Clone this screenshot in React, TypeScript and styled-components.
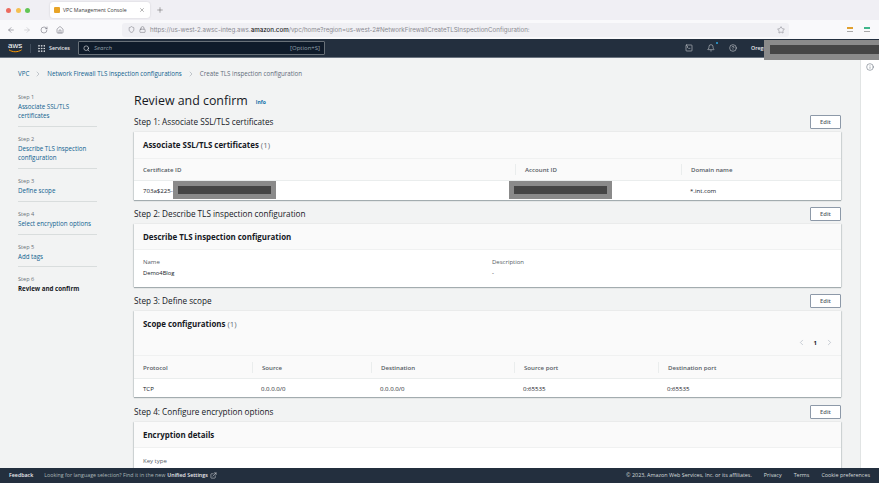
import React from "react";
import styled, { createGlobalStyle } from "styled-components";
import {
  ArrowLeft, ArrowRight, RotateCw, Home, Shield, Lock, Star, Search, Grip, Bell,
  CircleHelp, SquareTerminal, Info, ChevronLeft, ChevronRight, ExternalLink, Plus, X,
} from "lucide-react";

const Global = createGlobalStyle`
  html, body { margin: 0; padding: 0; height: 100%; overflow: hidden; }
  #root { height: 100%; }
  * { box-sizing: border-box; }
  body { font-family: "Open Sans", "Liberation Sans", sans-serif; color: #16191f; }
`;

const Shell = styled.div`display: flex; flex-direction: column; height: 100vh; background: #f2f3f3; overflow: hidden;`;

const TabBar = styled.div`height: 20px; background: #f0eff4; display: flex; align-items: center; padding: 0 0 0 6px; flex: none;`;
const Lights = styled.div`display: flex; gap: 4.5px; width: 44px;`;
const Light = styled.span<{ $c: string }>`width: 5px; height: 5px; border-radius: 50%; background: ${p => p.$c};`;
const Tab = styled.div`
  width: 100px; height: 16px; background: #fff; border-radius: 3px; display: flex; align-items: center;
  padding: 0 5px 0 4px; gap: 3px; font-size: 5.2px; color: #3b3b3b; box-shadow: 0 0 2px rgba(0,0,0,.15);
`;
const TabTitle = styled.span`flex: 1; white-space: nowrap;`;
const Cube = styled.span`width: 6px; height: 6px; border-radius: 1px; background: #e8a427; flex: none;`;
const NewTab = styled.span`display: flex; margin-left: 6px; color: #444;`;

const AddressBar = styled.div`height: 19px; background: #f9f9fb; display: flex; align-items: center; padding: 0 0 0 7px; flex: none;`;
const NavIcons = styled.div`display: flex; align-items: center; gap: 8.3px; width: 115px; color: #5b5b66;`;
const UrlBox = styled.div`
  width: 667px; height: 14px; background: #f0f0f4; border-radius: 3px; display: flex; align-items: center;
  padding: 0 4px 0 6px; gap: 4px; color: #5b5b66; flex: none;
`;
const UrlText = styled.span`flex: 1; font-size: 6.2px; color: #8a8a92; white-space: nowrap; font-family: "Inter", "Open Sans", sans-serif;`;
const UrlStrong = styled.b`color: #222; font-weight: 500;`;
const Extensions = styled.div`display: flex; flex: 1; justify-content: flex-end; align-items: center; gap: 11px; padding-right: 9px;`;
const ExtMark = styled.span<{ $c: string }>`width: 6px; height: 5px; border-top: 2px solid ${p => p.$c}; border-bottom: 1px solid #a9a9a9;`;

const TopNav = styled.header`
  height: 19px; background: #232f3e; border-bottom: 1px solid #6b7480; display: flex; align-items: center;
  position: relative; color: #d5dbdb; flex: none;
`;
const LogoWrap = styled.div`
  width: 23px; margin-left: 8px; display: flex; flex-direction: column; align-items: flex-start; color: #fff;
`;
const LogoText = styled.span`font-size: 8px; line-height: 6px; font-weight: 400; font-family: "Liberation Sans", sans-serif;`;
const NavSep = styled.span`width: 1px; height: 9px; background: #414d5c; margin: 0 6px 0 -1px;`;
const ServicesBtn = styled.div`display: flex; align-items: center; gap: 3px; font-size: 5.3px; font-weight: 600; color: #e9ebed; width: 41px; flex: none;`;
const SearchBox = styled.div`
  width: 247px; height: 14px; background: #0f1b2a; border: 1px solid #687078; border-radius: 1px; display: flex;
  align-items: center; padding: 0 4px; gap: 4px; font-size: 6px; color: #95a1ab;
`;
const SearchHint = styled.span`flex: 1; font-style: italic;`;
const NavRight = styled.div`display: flex; align-items: center; margin-left: auto; width: 194px; gap: 14px; color: #e9ebed; flex: none;`;
const NavDot = styled.span`position: relative; display: flex;`;
const Dot = styled.span`position: absolute; right: -3px; top: -2px; width: 2px; height: 2px; background: #2ea7e0; border-radius: 50%;`;
const Region = styled.span`font-size: 5.3px; font-weight: 600;`;
const TopRedaction = styled.div`
  position: absolute; right: 0; top: 1px; width: 115px; height: 20px; background: #8a8a8a;
  padding: 5px 0 6px 6px; z-index: 3;
`;
const RedactionFill = styled.div`width: 100%; height: 100%; background: #454545;`;

const Body = styled.div`flex: 1; display: flex; min-height: 0;`;
const Content = styled.div`flex: 1; display: flex; flex-direction: column; min-width: 0; overflow: hidden;`;
const Rail = styled.aside`width: 19px; background: #fff; border-left: 1px solid #e1e4e4; display: flex; justify-content: center; padding-top: 5px; color: #414d5c; flex: none;`;

const Breadcrumbs = styled.nav`height: 34px; padding: 0 0 3px 18px; display: flex; align-items: center; gap: 5px; font-size: 6.2px; color: #5f6b7a; flex: none;`;
const Crumb = styled.span`color: #0f5f8f; font-weight: 500;`;
const Columns = styled.div`display: flex; flex: 1; min-height: 0;`;
const Sidebar = styled.aside`width: 134px; padding: 1px 37px 0 18px; flex: none;`;
const Step = styled.div`
  padding-bottom: 6px; margin-bottom: 8px; border-bottom: 1px solid #d9dddd;
  &:nth-child(5) { padding-bottom: 5px; }
  &:last-child { border: 0; }
`;
const StepLabel = styled.div`font-size: 5.6px; line-height: 9px; color: #687078;`;
const StepLink = styled.div<{ $active?: boolean }>`
  font-size: 6.2px; line-height: 9px; color: ${p => (p.$active ? "#16191f" : "#0f5f8f")}; font-weight: ${p => (p.$active ? 700 : 500)};
`;

const Main = styled.main`width: 707px; flex: none;`;
const TitleRow = styled.div`height: 24px; margin-top: -1px; display: flex; align-items: flex-start; gap: 8px;`;
const PageTitle = styled.h1`margin: 0; font-size: 12.4px; line-height: 19px; font-weight: 400; color: #16191f;`;
const InfoLink = styled.span`font-size: 5px; line-height: 10px; font-weight: 700; color: #0f6fa8; padding-top: 6px;`;

const Section = styled.section<{ $gap?: number }>`margin-bottom: ${p => p.$gap ?? 7}px;`;
const SectionHead = styled.div`height: 17px; display: flex; align-items: flex-start; justify-content: space-between;`;
const SectionTitle = styled.h2`margin: 0; font-size: 8.2px; line-height: 14px; font-weight: 400; color: #16191f;`;
const EditBtn = styled.button`
  width: 31px; height: 14px; background: #fff; border: 1px solid #8d99a8; border-radius: 1px; font: 600 5.8px "Open Sans", sans-serif;
  color: #545b64; padding: 0;
`;
const Card = styled.div`background: #fff; box-shadow: 0 1px 1px rgba(0,28,36,.3), 1px 0 1px rgba(0,28,36,.1), -1px 0 1px rgba(0,28,36,.1);`;
const CardHead = styled.div<{ $h: number }>`
  height: ${p => p.$h}px; background: #fafafa; padding: 0 9px; position: relative; border-bottom: 1px solid #f0f1f1;
`;
const CardTitle = styled.h3`margin: 0; font-size: 7.9px; line-height: 26px; font-weight: 700; color: #16191f;`;
const Count = styled.span`font-weight: 400; color: #687078;`;
const Pager = styled.div`position: absolute; right: 7px; bottom: 8px; display: flex; align-items: center; gap: 8px; font-size: 6px; font-weight: 700; color: #16191f;`;
const PagerIcon = styled.span`display: flex; color: #8d99a8;`;

const Row = styled.div<{ $cols: string; $h: number; $head?: boolean }>`
  display: grid; grid-template-columns: ${p => p.$cols}; height: ${p => p.$h}px; align-items: center; position: relative;
  background: ${p => (p.$head ? "#fafafa" : "#fff")};
  border-bottom: ${p => (p.$head ? "1px solid #eaeded" : "0")};
`;
const HeadCell = styled.div`
  font-size: 6.1px; font-weight: 600; color: #545b64; padding-left: 9px; height: 11px; line-height: 11px; white-space: nowrap;
  & + & { border-left: 1px solid #eaeded; }
`;
const BodyCell = styled.div`font-size: 6.1px; color: #16191f; padding-left: 9px; white-space: nowrap;`;
const Redaction = styled.div<{ $left: number }>`
  position: absolute; left: ${p => p.$left}px; top: 0; width: 103px; height: 18px; background: #8a8a8a; padding: 5px; z-index: 2;
`;

const KV = styled.div<{ $pad: number }>`display: grid; grid-template-columns: 349px 1fr; padding: ${p => p.$pad}px 9px 0; height: 37px;`;
const KVLabel = styled.div`font-size: 6px; line-height: 10px; color: #545b64;`;
const KVValue = styled.div`font-size: 5.8px; line-height: 12px; color: #16191f;`;

const Footer = styled.footer`
  height: 15px; background: #232f3e; color: #d5dbdb; display: flex; align-items: center; padding: 0 9px 1px 9px;
  font-size: 5.3px; flex: none; position: relative; z-index: 2;
`;
const FootStrong = styled.span`font-weight: 600; color: #e9ebed;`;
const FootNote = styled.span`margin-left: 11px; color: #aab7b8; display: flex; align-items: center; gap: 2px;`;
const FootRight = styled.div`margin-left: auto; display: flex; gap: 12px; font-size: 5.4px;`;

const steps: [string, string[], boolean?][] = [
  ["Step 1", ["Associate SSL/TLS", "certificates"]],
  ["Step 2", ["Describe TLS inspection", "configuration"]],
  ["Step 3", ["Define scope"]],
  ["Step 4", ["Select encryption options"]],
  ["Step 5", ["Add tags"]],
  ["Step 6", ["Review and confirm"], true],
];

const certCols = "381px 166px 160px";
const scopeCols = "118px 119px 143px 144px 183px";

export default function App() {
  return (
    <Shell>
      <Global />
      <TabBar>
        <Lights>
          <Light $c="#ec6a5e" /><Light $c="#f4bf4f" /><Light $c="#61c554" />
        </Lights>
        <Tab>
          <Cube />
          <TabTitle>VPC Management Console</TabTitle>
          <X size={6} strokeWidth={1.5} />
        </Tab>
        <NewTab><Plus size={8} strokeWidth={1.3} /></NewTab>
      </TabBar>
      <AddressBar>
        <NavIcons>
          <ArrowLeft size={8} strokeWidth={1.5} />
          <ArrowRight size={8} strokeWidth={1.5} color="#b5b5bb" />
          <RotateCw size={8} strokeWidth={1.5} />
          <Home size={8} strokeWidth={1.5} />
        </NavIcons>
        <UrlBox>
          <Shield size={7} strokeWidth={1.5} />
          <Lock size={7} strokeWidth={1.5} />
          <UrlText>
            https://us-west-2.awsc-integ.aws.<UrlStrong>amazon.com</UrlStrong>/vpc/home?region=us-west-2#NetworkFirewallCreateTLSInspectionConfiguration:
          </UrlText>
          <Star size={8} strokeWidth={1.2} />
        </UrlBox>
        <Extensions>
          <ExtMark $c="#e0a030" />
          <ExtMark $c="#3fb68b" />
        </Extensions>
      </AddressBar>
      <TopNav>
        <LogoWrap>
          <LogoText>aws</LogoText>
          <svg width="15" height="4" viewBox="0 0 15 4">
            <path d="M1 .8C4.5 3.4 10 3.4 13.6 .8" fill="none" stroke="#f90" strokeWidth="1" />
          </svg>
        </LogoWrap>
        <NavSep />
        <ServicesBtn><Grip size={9} strokeWidth={2} /><span>Services</span></ServicesBtn>
        <SearchBox>
          <Search size={7} strokeWidth={1.8} color="#fff" />
          <SearchHint>Search</SearchHint>
          <span>[Option+S]</span>
        </SearchBox>
        <NavRight>
          <SquareTerminal size={8} strokeWidth={1.5} />
          <NavDot><Bell size={8} strokeWidth={1.5} /><Dot /></NavDot>
          <CircleHelp size={8} strokeWidth={1.5} />
          <Region>Oregon</Region>
        </NavRight>
        <TopRedaction><RedactionFill /></TopRedaction>
      </TopNav>
      <Body>
        <Content>
          <Breadcrumbs>
            <Crumb>VPC</Crumb>
            <ChevronRight size={8} strokeWidth={1} />
            <Crumb>Network Firewall TLS inspection configurations</Crumb>
            <ChevronRight size={8} strokeWidth={1} />
            <span>Create TLS inspection configuration</span>
          </Breadcrumbs>
          <Columns>
            <Sidebar>
              {steps.map(([label, lines, active]) => (
                <Step key={label}>
                  <StepLabel>{label}</StepLabel>
                  {lines.map(l => <StepLink key={l} $active={active}>{l}</StepLink>)}
                </Step>
              ))}
            </Sidebar>
            <Main>
              <TitleRow>
                <PageTitle>Review and confirm</PageTitle>
                <InfoLink>Info</InfoLink>
              </TitleRow>

              <Section>
                <SectionHead>
                  <SectionTitle>Step 1: Associate SSL/TLS certificates</SectionTitle>
                  <EditBtn>Edit</EditBtn>
                </SectionHead>
                <Card>
                  <CardHead $h={27}><CardTitle>Associate SSL/TLS certificates <Count>(1)</Count></CardTitle></CardHead>
                  <Row $cols={certCols} $h={22} $head>
                    <HeadCell>Certificate ID</HeadCell>
                    <HeadCell>Account ID</HeadCell>
                    <HeadCell>Domain name</HeadCell>
                  </Row>
                  <Row $cols={certCols} $h={19}>
                    <BodyCell>703a$225-</BodyCell>
                    <BodyCell />
                    <BodyCell>*.int.com</BodyCell>
                    <Redaction $left={39}><RedactionFill /></Redaction>
                    <Redaction $left={375}><RedactionFill /></Redaction>
                  </Row>
                </Card>
              </Section>

              <Section>
                <SectionHead>
                  <SectionTitle>Step 2: Describe TLS inspection configuration</SectionTitle>
                  <EditBtn>Edit</EditBtn>
                </SectionHead>
                <Card>
                  <CardHead $h={26}><CardTitle>Describe TLS inspection configuration</CardTitle></CardHead>
                  <KV $pad={7}>
                    <div><KVLabel>Name</KVLabel><KVValue>Demo4Blog</KVValue></div>
                    <div><KVLabel>Description</KVLabel><KVValue>-</KVValue></div>
                  </KV>
                </Card>
              </Section>

              <Section $gap={8}>
                <SectionHead>
                  <SectionTitle>Step 3: Define scope</SectionTitle>
                  <EditBtn>Edit</EditBtn>
                </SectionHead>
                <Card>
                  <CardHead $h={45}>
                    <CardTitle>Scope configurations <Count>(1)</Count></CardTitle>
                    <Pager>
                      <PagerIcon><ChevronLeft size={9} strokeWidth={1.2} /></PagerIcon>
                      <span>1</span>
                      <PagerIcon><ChevronRight size={9} strokeWidth={1.2} /></PagerIcon>
                    </Pager>
                  </CardHead>
                  <Row $cols={scopeCols} $h={23} $head>
                    <HeadCell>Protocol</HeadCell>
                    <HeadCell>Source</HeadCell>
                    <HeadCell>Destination</HeadCell>
                    <HeadCell>Source port</HeadCell>
                    <HeadCell>Destination port</HeadCell>
                  </Row>
                  <Row $cols={scopeCols} $h={18}>
                    <BodyCell>TCP</BodyCell>
                    <BodyCell>0.0.0.0/0</BodyCell>
                    <BodyCell>0.0.0.0/0</BodyCell>
                    <BodyCell>0:65535</BodyCell>
                    <BodyCell>0:65535</BodyCell>
                  </Row>
                </Card>
              </Section>

              <Section>
                <SectionHead>
                  <SectionTitle>Step 4: Configure encryption options</SectionTitle>
                  <EditBtn>Edit</EditBtn>
                </SectionHead>
                <Card>
                  <CardHead $h={26}><CardTitle>Encryption details</CardTitle></CardHead>
                  <KV $pad={8}><KVLabel>Key type</KVLabel></KV>
                </Card>
              </Section>
            </Main>
          </Columns>
        </Content>
        <Rail><Info size={8} strokeWidth={1.4} /></Rail>
      </Body>
      <Footer>
        <FootStrong>Feedback</FootStrong>
        <FootNote>
          Looking for language selection? Find it in the new <FootStrong>Unified Settings</FootStrong>
          <ExternalLink size={7} strokeWidth={1.5} color="#fff" />
        </FootNote>
        <FootRight>
          <span>© 2023, Amazon Web Services, Inc. or its affiliates.</span>
          <span>Privacy</span>
          <span>Terms</span>
          <span>Cookie preferences</span>
        </FootRight>
      </Footer>
    </Shell>
  );
}
